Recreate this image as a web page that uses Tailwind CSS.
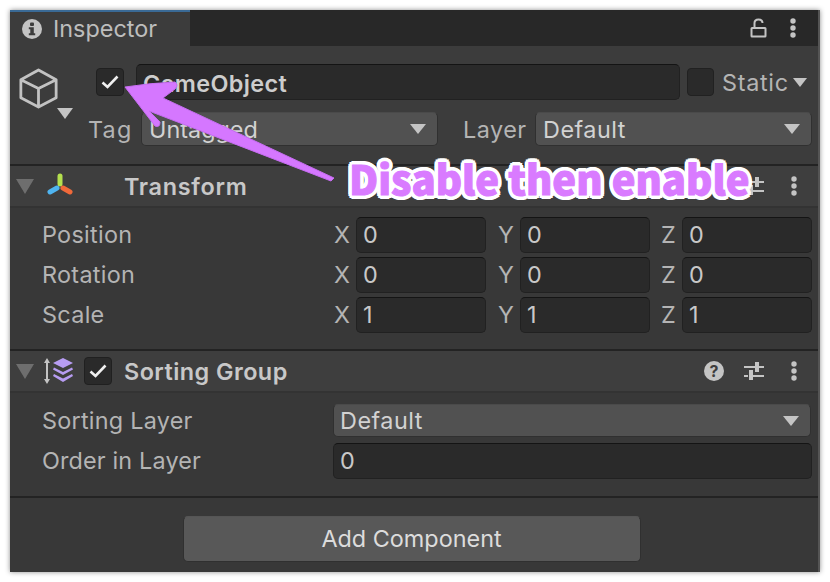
<!DOCTYPE html>
<html lang="en">
<head>
  <meta charset="UTF-8">
  <title>Inspector</title>
  <script src="https://cdn.jsdelivr.net/npm/@tailwindcss/browser@4"></script>
</head>
<body class="bg-white w-[830px] h-[582px] overflow-hidden font-['Inter','Liberation_Sans',sans-serif] text-[23.4px] leading-none text-[#c4c4c4]">
  <div class="pt-[10px] pl-[10px]">
    <div class="relative w-[810px] h-[562px] bg-[#383838] shadow-[0_0_5px_rgba(0,0,0,0.45)] border-r-2 border-[#555]">

      <!-- Tab bar -->
      <div class="flex h-[36px] bg-[#282828]">
        <div class="flex items-center w-[180px] h-[36px] pl-[12px] gap-[11px] bg-[#3c3c3c] border-t-2 border-[#3a6a96]">
          <svg width="20" height="20" viewBox="0 0 20 20"><circle cx="10" cy="10" r="10" fill="#c4c4c4"/><rect x="8" y="3.5" width="4" height="3.4" rx="1" fill="#3c3c3c"/><path d="M6.8 8.3h5v6h1.4v2H6.800v-2h1.500v-4H6.800z" fill="#3c3c3c"/></svg>
          <span class="text-[#bdbdbd]">Inspector</span>
        </div>
        <div class="ml-auto flex items-center gap-[22px] pr-[22px]">
          <svg width="18" height="20" viewBox="0 0 18 20" fill="none" stroke="#c4c4c4" stroke-width="2"><rect x="1.500" y="10" width="14" height="8.500" rx="0.500"/><path d="M4.500 10V5q0-3.500 4-3.500t4 3.500"/></svg>
          <svg width="6" height="20" viewBox="0 0 6 20" fill="#c4c4c4"><circle cx="3" cy="3" r="2.700"/><circle cx="3" cy="10" r="2.700"/><circle cx="3" cy="17" r="2.700"/></svg>
        </div>
      </div>

      <!-- GameObject header -->
      <div class="flex h-[120px] bg-[#3c3c3c] border-b-2 border-[#232323]">
        <div class="relative w-[72px] pl-[9px] pt-[22px]">
          <svg width="39" height="41" viewBox="0 0 42 44" fill="none" stroke="#c2c2c2" stroke-width="3" stroke-linejoin="round"><path d="M21 2 40 12.500V32L21 42 2 32V12.500zM2 12.500 21 22 40 12.500M21 22V42"/></svg>
          <div class="absolute left-[47px] top-[62px] w-0 h-0 border-x-[8px] border-x-transparent border-t-[11px] border-t-[#c4c4c4]"></div>
        </div>
        <div class="flex-1 pt-[18px]">
          <div class="flex items-center h-[36px]">
            <div class="flex items-center justify-center w-[28px] h-[28px] ml-[14px] rounded-[4px] bg-[#2a2a2a] border border-[#202020]">
              <svg width="18" height="14" viewBox="0 0 18 14" fill="none" stroke="#f0f0f0" stroke-width="2.600"><path d="M1.500 7.500 6.500 12 16.500 1.500"/></svg>
            </div>
            <div class="flex items-center w-[544px] h-[36px] ml-[12px] pl-[6px] pt-[3px] rounded-[5px] bg-[#2a2a2a] border border-[#212121] border-t-[#141414] font-semibold tracking-[0.4px] text-[#cdcdcd]">GameObject</div>
            <div class="w-[27px] h-[28px] ml-[7px] rounded-[4px] bg-[#2a2a2a] border border-[#212121]"></div>
            <span class="ml-[8px] w-[65px] pt-[2px] tracking-[0.7px] text-[#b4b4b4]">Static</span>
            <div class="ml-[6px] w-0 h-0 border-x-[7px] border-x-transparent border-t-[9px] border-t-[#c4c4c4]"></div>
          </div>
          <div class="flex items-center h-[34px] mt-[12px]">
            <span class="ml-[6px] w-[53px] pt-[1px] tracking-[1.2px] text-[#b4b4b4]">Tag</span>
            <div class="flex items-center justify-between w-[297px] h-[34px] pl-[7px] pr-[11px] rounded-[5px] bg-[#515151] border border-[#303030] border-t-[#4a4a4a] text-[#d2d2d2]">
              <span class="pt-[1px]">Untagged</span>
              <div class="w-0 h-0 border-x-[8px] border-x-transparent border-t-[10px] border-t-[#c4c4c4]"></div>
            </div>
            <span class="ml-[25px] w-[72px] pt-[1px] tracking-[0.5px] text-[#b4b4b4]">Layer</span>
            <div class="flex items-center justify-between w-[277px] h-[34px] pl-[7px] pr-[11px] rounded-[5px] bg-[#515151] border border-[#303030] border-t-[#4a4a4a] text-[#d2d2d2]">
              <span class="pt-[1px] tracking-[0.5px]">Default</span>
              <div class="w-0 h-0 border-x-[8px] border-x-transparent border-t-[10px] border-t-[#c4c4c4]"></div>
            </div>
          </div>
        </div>
      </div>

      <!-- Transform -->
      <div class="flex items-center h-[42px] bg-[#3e3e3e] border-b-2 border-[#333] pl-[6px]">
        <div class="w-0 h-0 border-x-[9px] border-x-transparent border-t-[15px] border-t-[#6e6e6e]"></div>
        <svg class="ml-[12px]" width="28" height="26" viewBox="0 0 28 26" fill="none" stroke-width="5" stroke-linecap="round"><path d="M14 3V11" stroke="#b4e04e"/><path d="M11 15 4 19" stroke="#4fb4f0"/><path d="M17 15 24 19" stroke="#f0693a"/></svg>
        <span class="ml-[50px] pt-[1px] font-semibold tracking-[0.7px] text-[#c8c8c8]">Transform</span>
        <div class="ml-auto flex items-center gap-[27px] pr-[21px]">
          <svg width="20" height="20" viewBox="0 0 20 20" fill="#c4c4c4"><path d="M0 5h11V7H0zM15 5h5V7h-5zM11 1h4v10h-4zM0 14h4v2H0zM9 14h11v2H9zM5 9h4v10H5z"/></svg>
          <svg width="6" height="20" viewBox="0 0 6 20" fill="#c4c4c4"><circle cx="3" cy="3" r="2.700"/><circle cx="3" cy="10" r="2.700"/><circle cx="3" cy="17" r="2.700"/></svg>
        </div>
      </div>
      <div class="h-[143px] pt-[9px] pl-[32px] border-b-2 border-[#232323] flex flex-col gap-[4px] text-[#b4b4b4]">
        <div class="flex items-center h-[36px]">
          <span class="w-[292px] tracking-[0.3px]">Position</span>
          <div class="flex items-center w-[152px]"><span class="w-[22px]">X</span><div class="flex items-center w-[130px] h-[36px] pl-[6px] rounded-[5px] bg-[#2a2a2a] border border-[#212121] border-t-[#141414] text-[#c8c8c8]">0</div></div>
          <div class="flex items-center w-[152px] ml-[12px]"><span class="w-[22px]">Y</span><div class="flex items-center w-[130px] h-[36px] pl-[6px] rounded-[5px] bg-[#2a2a2a] border border-[#212121] border-t-[#141414] text-[#c8c8c8]">0</div></div>
          <div class="flex items-center w-[151px] ml-[11px]"><span class="w-[21px]">Z</span><div class="flex items-center w-[130px] h-[36px] pl-[6px] rounded-[5px] bg-[#2a2a2a] border border-[#212121] border-t-[#141414] text-[#c8c8c8]">0</div></div>
        </div>
        <div class="flex items-center h-[36px]">
          <span class="w-[292px] tracking-[0.3px]">Rotation</span>
          <div class="flex items-center w-[152px]"><span class="w-[22px]">X</span><div class="flex items-center w-[130px] h-[36px] pl-[6px] rounded-[5px] bg-[#2a2a2a] border border-[#212121] border-t-[#141414] text-[#c8c8c8]">0</div></div>
          <div class="flex items-center w-[152px] ml-[12px]"><span class="w-[22px]">Y</span><div class="flex items-center w-[130px] h-[36px] pl-[6px] rounded-[5px] bg-[#2a2a2a] border border-[#212121] border-t-[#141414] text-[#c8c8c8]">0</div></div>
          <div class="flex items-center w-[151px] ml-[11px]"><span class="w-[21px]">Z</span><div class="flex items-center w-[130px] h-[36px] pl-[6px] rounded-[5px] bg-[#2a2a2a] border border-[#212121] border-t-[#141414] text-[#c8c8c8]">0</div></div>
        </div>
        <div class="flex items-center h-[36px]">
          <span class="w-[292px] tracking-[0.3px]">Scale</span>
          <div class="flex items-center w-[152px]"><span class="w-[22px]">X</span><div class="flex items-center w-[130px] h-[36px] pl-[6px] rounded-[5px] bg-[#2a2a2a] border border-[#212121] border-t-[#141414] text-[#c8c8c8]">1</div></div>
          <div class="flex items-center w-[152px] ml-[12px]"><span class="w-[22px]">Y</span><div class="flex items-center w-[130px] h-[36px] pl-[6px] rounded-[5px] bg-[#2a2a2a] border border-[#212121] border-t-[#141414] text-[#c8c8c8]">1</div></div>
          <div class="flex items-center w-[151px] ml-[11px]"><span class="w-[21px]">Z</span><div class="flex items-center w-[130px] h-[36px] pl-[6px] rounded-[5px] bg-[#2a2a2a] border border-[#212121] border-t-[#141414] text-[#c8c8c8]">1</div></div>
        </div>
      </div>

      <!-- Sorting Group -->
      <div class="flex items-center h-[42px] bg-[#3e3e3e] border-b-2 border-[#333] pl-[6px]">
        <div class="w-0 h-0 border-x-[9px] border-x-transparent border-t-[15px] border-t-[#6e6e6e]"></div>
        <svg class="ml-[10px]" width="30" height="26" viewBox="0 0 30 26"><path d="M3 2V24" stroke="#c4c4c4" stroke-width="2"/><path d="M0 5 3 0 6 5zM0 21 3 26 6 21z" fill="#c4c4c4"/><path d="M19 0 29 5 19 10 9 5z" fill="#b79cf2"/><path d="M10 9.500 19 14 28 9.500 29 11.500 19 17 9 11.500z" fill="#b79cf2"/><path d="M10 16 19 20.500 28 16 29 18 19 24 9 18z" fill="#b79cf2"/></svg>
        <div class="flex items-center justify-center w-[28px] h-[28px] ml-[10px] rounded-[4px] bg-[#2a2a2a] border border-[#202020]">
          <svg width="18" height="14" viewBox="0 0 18 14" fill="none" stroke="#f0f0f0" stroke-width="2.600"><path d="M1.500 7.500 6.500 12 16.500 1.500"/></svg>
        </div>
        <span class="ml-[12px] pt-[1px] font-semibold tracking-[0.45px] text-[#c8c8c8]">Sorting Group</span>
        <div class="ml-auto flex items-center gap-[20px] pr-[21px]">
          <div class="flex items-center justify-center w-[20px] h-[20px] rounded-full bg-[#c4c4c4] text-[#3e3e3e] text-[16px] font-bold">?</div>
          <svg width="20" height="20" viewBox="0 0 20 20" fill="#c4c4c4"><path d="M0 5h11V7H0zM15 5h5V7h-5zM11 1h4v10h-4zM0 14h4v2H0zM9 14h11v2H9zM5 9h4v10H5z"/></svg>
          <svg class="ml-[7px]" width="6" height="20" viewBox="0 0 6 20" fill="#c4c4c4"><circle cx="3" cy="3" r="2.700"/><circle cx="3" cy="10" r="2.700"/><circle cx="3" cy="17" r="2.700"/></svg>
        </div>
      </div>
      <div class="h-[105px] pt-[11px] pl-[32px] border-b-2 border-[#232323] flex flex-col gap-[6px] text-[#b4b4b4]">
        <div class="flex items-center h-[33px]">
          <span class="w-[291px] tracking-[0.25px]">Sorting Layer</span>
          <div class="flex items-center justify-between w-[478px] h-[33px] pl-[6px] pr-[11px] rounded-[5px] bg-[#515151] border border-[#303030] border-t-[#4a4a4a] text-[#d2d2d2]">
            <span class="tracking-[0.5px]">Default</span>
            <div class="w-0 h-0 border-x-[8px] border-x-transparent border-t-[10px] border-t-[#c4c4c4]"></div>
          </div>
        </div>
        <div class="flex items-center h-[36px]">
          <span class="w-[291px] tracking-[0.15px]">Order in Layer</span>
          <div class="flex items-center w-[479px] h-[36px] pl-[6px] rounded-[5px] bg-[#2a2a2a] border border-[#212121] border-t-[#141414] text-[#c8c8c8]">0</div>
        </div>
      </div>

      <!-- Add Component -->
      <div class="flex justify-center pt-[18px] pr-[5px]">
        <button class="w-[458px] h-[46px] rounded-[5px] bg-[#585858] border border-[#303030] border-t-[#555] text-[#dcdcdc]">Add Component</button>
      </div>

      <!-- Annotation over the screenshot -->
      <svg class="absolute left-0 top-0 pointer-events-none" width="810" height="562" viewBox="0 0 810 562">
        <path d="M115 77 Q140 73 165 72 Q169 75 165 79 L153 88 L324 168 L321 171 L139 101 L150 112 Q150 118 145 116z" fill="#d577ff" stroke="#c56cf0" stroke-width="1" stroke-linejoin="round"/>
      </svg>
      <span class="absolute left-[339px] top-[143px] font-['Noto_Sans_CJK_JP',sans-serif] font-black text-[40px] leading-[50px] text-[#d97bff] whitespace-nowrap [-webkit-text-stroke:1px_#d97bff] [text-shadow:3px_0_0_#fff,-3px_0_0_#fff,0_3px_0_#fff,0_-3px_0_#fff,2px_2px_0_#fff,-2px_2px_0_#fff,2px_-2px_0_#fff,-2px_-2px_0_#fff,4px_1px_0_#fff,-4px_1px_0_#fff,4px_-1px_0_#fff,-4px_-1px_0_#fff,1px_4px_0_#fff,-1px_4px_0_#fff,1px_-4px_0_#fff,-1px_-4px_0_#fff,3px_3px_0_#fff,-3px_3px_0_#fff,3px_-3px_0_#fff,-3px_-3px_0_#fff]">Disable then enable</span>
    </div>
  </div>
</body>
</html>
